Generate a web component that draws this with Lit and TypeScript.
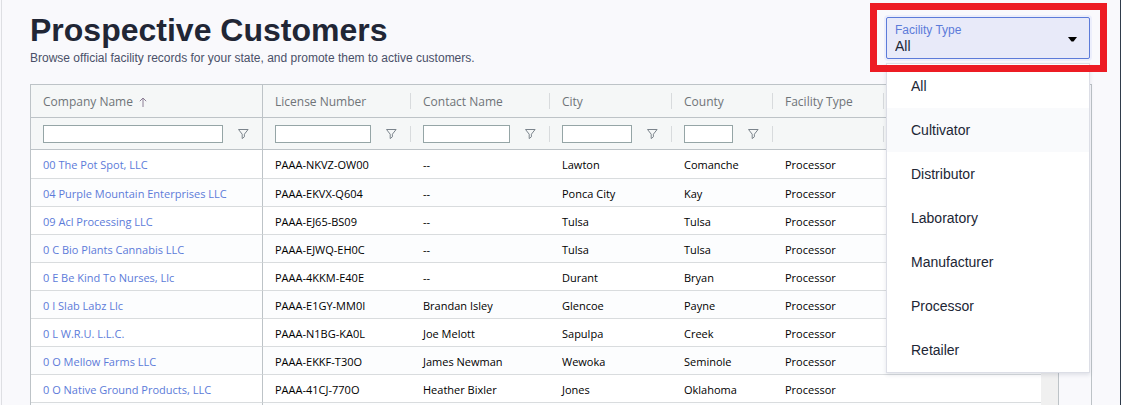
import { LitElement, html, css, svg, nothing } from "lit";
import { customElement, property, state } from "lit/decorators.js";

interface Column {
  key: string;
  label: string;
  filter: boolean;
}

const COLUMNS: Column[] = [
  { key: "company", label: "Company Name", filter: true },
  { key: "license", label: "License Number", filter: true },
  { key: "contact", label: "Contact Name", filter: true },
  { key: "city", label: "City", filter: true },
  { key: "county", label: "County", filter: true },
  { key: "type", label: "Facility Type", filter: false },
];

const ROWS: string[][] = [
  ["00 The Pot Spot, LLC", "PAAA-NKVZ-OW00", "--", "Lawton", "Comanche", "Processor"],
  ["04 Purple Mountain Enterprises LLC", "PAAA-EKVX-Q604", "--", "Ponca City", "Kay", "Processor"],
  ["09 Acl Processing LLC", "PAAA-EJ65-BS09", "--", "Tulsa", "Tulsa", "Processor"],
  ["0 C Bio Plants Cannabis LLC", "PAAA-EJWQ-EH0C", "--", "Tulsa", "Tulsa", "Processor"],
  ["0 E Be Kind To Nurses, Llc", "PAAA-4KKM-E40E", "--", "Durant", "Bryan", "Processor"],
  ["0 I Slab Labz Llc", "PAAA-E1GY-MM0I", "Brandan Isley", "Glencoe", "Payne", "Processor"],
  ["0 L W.R.U. L.L.C.", "PAAA-N1BG-KA0L", "Joe Melott", "Sapulpa", "Creek", "Processor"],
  ["0 O Mellow Farms LLC", "PAAA-EKKF-T30O", "James Newman", "Wewoka", "Seminole", "Processor"],
  ["0 O Native Ground Products, LLC", "PAAA-41CJ-770O", "Heather Bixler", "Jones", "Oklahoma", "Processor"],
];

const TYPES = ["All", "Cultivator", "Distributor", "Laboratory", "Manufacturer", "Processor", "Retailer"];

const funnel = svg`<path d="M0.5 0.5h9.6L6.4 5.2v2.6L4.2 9.6V5.2z" fill="none" stroke="#7b848c" stroke-width="1"/>`;

@customElement("facility-select")
export class FacilitySelect extends LitElement {
  @property() value = "All";
  @property() active = "Cultivator";

  static styles = css`
    :host {
      display: block;
      position: relative;
      width: 204px;
      font-family: "Liberation Sans", Arial, sans-serif;
    }
    .field {
      display: flex;
      flex-direction: column;
      box-sizing: border-box;
      height: 42px;
      padding: 5px 8px 0;
      border: 1px solid #5c7bd9;
      border-radius: 2px;
      background: #e8eaf9;
      box-shadow: 0 0 0 2px #eceefb;
      position: relative;
    }
    .label {
      font-size: 12px;
      line-height: 14px;
      color: #5c7bd9;
    }
    .select {
      appearance: none;
      width: 100%;
      height: 18px;
      margin: 0;
      padding: 0;
      border: 0;
      outline: 0;
      background: none;
      font: 14px/18px "Liberation Sans", Arial, sans-serif;
      color: #212635;
    }
    .caret {
      position: absolute;
      right: 12px;
      top: 19px;
      width: 9px;
      height: 5px;
    }
    .menu {
      position: absolute;
      z-index: 1;
      top: 46px;
      left: 0;
      right: 0;
      border: 1px solid #dcdee6;
      background: #fff;
      box-shadow: 0 2px 4px rgba(40, 50, 80, 0.12);
    }
    .option {
      display: block;
      width: 100%;
      height: 44px;
      padding: 0 24px;
      border: 0;
      background: #fff;
      text-align: left;
      font: 14px/20px "Liberation Sans", Arial, sans-serif;
      color: #212635;
    }
    .option.active {
      background: #f9fafc;
    }
    .highlight {
      position: absolute;
      z-index: 2;
      inset: -14px -17px -13px -16px;
      border: 7px solid #ed1c24;
      pointer-events: none;
    }
  `;

  render() {
    return html`
      <div class="field">
        <label class="label" for="type">Facility Type</label>
        <select class="select" id="type">
          ${TYPES.map((t) => html`<option ?selected=${t === this.value}>${t}</option>`)}
        </select>
        <svg class="caret" viewBox="0 0 9 5"><path d="M0 0h9L5.5 4.4h-2z" fill="#000" /></svg>
      </div>
      <div class="menu" role="listbox" aria-label="Facility Type">
        ${TYPES.map(
          (t) => html`<button
            class="option ${t === this.active ? "active" : ""}"
            role="option"
            aria-selected=${t === this.value}
            @click=${() => (this.value = t)}
          >${t}</button>`
        )}
      </div>
      <div class="highlight"></div>
    `;
  }
}

@customElement("customer-grid")
export class CustomerGrid extends LitElement {
  static styles = css`
    :host {
      display: flex;
      border: 1px solid #bdc3c7;
      border-bottom: 0;
      background: #f9f9fc;
      font-family: "Open Sans", "Noto Sans", sans-serif;
      font-size: 12px;
      overflow: hidden;
    }
    .main {
      flex: 1;
      display: flex;
      min-width: 0;
      border-right: 1px solid #bdc3c7;
      background: #fff;
    }
    .grid {
      flex: 1;
      min-width: 0;
    }
    .track {
      width: 17px;
      background: #f0f0f0;
    }
    .sidebar {
      width: 32px;
    }
    .table {
      width: 100%;
      table-layout: fixed;
      border-collapse: separate;
      border-spacing: 0;
    }
    .company { width: 232px; }
    .license { width: 148px; }
    .contact { width: 139px; }
    .city { width: 122px; }
    .county { width: 101px; }
    .type { width: 111px; }
    th,
    td {
      box-sizing: border-box;
      padding: 0 0 0 12px;
      text-align: left;
      white-space: nowrap;
      font-size: 11px;
      line-height: 16px;
    }
    .head th {
      height: 33px;
      padding-top: 2px;
      font-size: 12px;
      font-weight: 400;
      color: #6f7478;
    }
    .filters th {
      height: 32px;
    }
    .head th,
    .filters th {
      border-bottom: 1px solid #bdc3c7;
      background: linear-gradient(#d8dbdd, #d8dbdd) right center / 1px 16px no-repeat #f5f7f7;
    }
    .head th:last-child,
    .filters th:last-child {
      background: #f5f7f7;
    }
    .row td {
      height: 28px;
      padding-top: 2px;
      border-bottom: 1px solid #d9dcde;
      color: #000;
    }
    .row:first-child td {
      height: 29px;
    }
    .row:nth-child(even) td {
      background: #fcfdfe;
    }
    tr > :first-child {
      border-right: 1px solid #bdc3c7;
    }
    .head th:first-child,
    .filters th:first-child {
      background: #f5f7f7;
    }
    .filter {
      display: flex;
      align-items: center;
      gap: 15px;
      padding-right: 15px;
    }
    .pinned .filter {
      padding-right: 14px;
    }
    .input {
      flex: 1;
      min-width: 0;
      box-sizing: border-box;
      height: 18px;
      margin: 0;
      padding: 0 2px;
      border: 1px solid #95a5a6;
      border-radius: 0;
      background: #fff;
      font: inherit;
    }
    .icon {
      display: block;
      width: 10px;
      height: 10px;
      padding: 0;
      border: 0;
      background: none;
    }
    .icon svg {
      display: block;
      overflow: visible;
    }
    .sort {
      display: inline-flex;
      align-items: center;
      gap: 6px;
    }
    .link {
      color: #5c7bd9;
      text-decoration: none;
    }
  `;

  render() {
    return html`
      <div class="main">
        <div class="grid">
          <table class="table">
            <colgroup>
              ${COLUMNS.map((c) => html`<col class=${c.key} />`)}
              <col />
            </colgroup>
            <thead>
              <tr class="head">
                ${COLUMNS.map((c, i) =>
                  i === 0
                    ? html`<th scope="col" aria-sort="ascending">
                        <span class="sort">${c.label}
                          <svg width="8" height="10" viewBox="0 0 8 10"><path d="M4 10V1M0.8 4.2L4 1l3.2 3.2" fill="none" stroke="#8c7f96" /></svg>
                        </span>
                      </th>`
                    : html`<th scope="col">${c.label}</th>`
                )}
                <th></th>
              </tr>
              <tr class="filters">
                ${COLUMNS.map((c, i) => html`<th class=${i === 0 ? "pinned" : ""}>
                  ${c.filter
                    ? html`<div class="filter">
                        <input class="input" type="text" aria-label="${c.label} filter" />
                        <button class="icon" aria-label="Filter ${c.label}">
                          <svg width="10" height="10" viewBox="0 0 10 10">${funnel}</svg>
                        </button>
                      </div>`
                    : nothing}
                </th>`)}
                <th></th>
              </tr>
            </thead>
            <tbody>
              ${ROWS.map((r) => html`<tr class="row">
                ${r.map((v, i) => html`<td>${i === 0 ? html`<a class="link" href="#">${v}</a>` : v}</td>`)}
                <td></td>
              </tr>`)}
              <tr class="row">
                ${COLUMNS.map(() => html`<td></td>`)}
                <td></td>
              </tr>
            </tbody>
          </table>
        </div>
        <div class="track"></div>
      </div>
      <div class="sidebar"></div>
    `;
  }
}

@customElement("app-root")
export class AppRoot extends LitElement {
  @state() private type = "All";

  static styles = css`
    :host {
      display: block;
      padding-left: 1px;
      background: #f9f9fc;
      font-family: "Liberation Sans", Arial, sans-serif;
    }
    .page {
      display: flex;
      flex-direction: column;
      box-sizing: border-box;
      height: 100vh;
      overflow: hidden;
      padding: 0 28px;
      border-left: 1px solid #dedfe3;
      border-right: 1px solid #2f3b4b;
    }
    .header {
      display: flex;
      justify-content: space-between;
      align-items: flex-start;
      height: 84px;
      padding-right: 2px;
    }
    .heading {
      padding-top: 12px;
    }
    .title {
      margin: 0;
      font-size: 32px;
      line-height: 36px;
      font-weight: 700;
      color: #212635;
    }
    .subtitle {
      margin: 3px 0 0;
      font-size: 12px;
      line-height: 14px;
      color: #4a5068;
    }
    .picker {
      margin-top: 17px;
      z-index: 1;
    }
    .customers {
      flex: 1;
      min-height: 0;
    }
  `;

  render() {
    return html`
      <main class="page">
        <header class="header">
          <div class="heading">
            <h1 class="title">Prospective Customers</h1>
            <p class="subtitle">Browse official facility records for your state, and promote them to active customers.</p>
          </div>
          <facility-select class="picker" .value=${this.type}></facility-select>
        </header>
        <customer-grid class="customers"></customer-grid>
      </main>
    `;
  }
}
